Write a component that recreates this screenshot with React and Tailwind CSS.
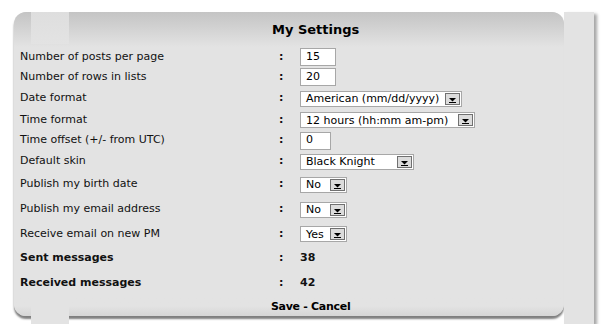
import React from 'react';

const Arrow = () => (
    <svg width="9" height="6" viewBox="0 0 9 6" className="block">
        <path d="M1 1h7L4.5 4.5z" fill="#000" />
        <rect x="1" y="5" width="7" height="1" fill="#000" />
    </svg>
);

const TextBox = ({ value, width }) => (
    <div className={`${width} h-[18px] border border-[#a7a7a7] bg-white flex items-center px-[5px] text-[11px] text-black`}>
        {value}
    </div>
);

const Select = ({ value, width }) => (
    <div className={`${width} h-[16px] border border-[#a7a7a7] bg-white flex items-center justify-between pl-[5px] pr-[1px]`}>
        <span className="text-[11px] text-black leading-none whitespace-nowrap">{value}</span>
        <div className="w-[15px] h-[12px] border border-[#707070] bg-[#dcdcdc] flex items-end justify-center pb-[1px] shrink-0">
            <Arrow />
        </div>
    </div>
);

const rows = [
    { label: 'Number of posts per page', h: 'h-[20px]', ctrl: <TextBox value="15" width="w-[36px]" /> },
    { label: 'Number of rows in lists', h: 'h-[20px]', ctrl: <TextBox value="20" width="w-[36px]" /> },
    { label: 'Date format', h: 'h-[23px]', ctrl: <Select value="American (mm/dd/yyyy)" width="w-[162px]" /> },
    { label: 'Time format', h: 'h-[20px]', ctrl: <Select value="12 hours (hh:mm am-pm)" width="w-[175px]" /> },
    { label: 'Time offset (+/- from UTC)', h: 'h-[21px]', ctrl: <TextBox value="0" width="w-[31px]" /> },
    { label: 'Default skin', h: 'h-[21px]', ctrl: <Select value="Black Knight" width="w-[114px]" /> },
    { label: 'Publish my birth date', h: 'h-[25px]', ctrl: <Select value="No" width="w-[47px]" /> },
    { label: 'Publish my email address', h: 'h-[25px]', ctrl: <Select value="No" width="w-[47px]" /> },
    { label: 'Receive email on new PM', h: 'h-[24px]', ctrl: <Select value="Yes" width="w-[47px]" /> },
    { label: 'Sent messages', h: 'h-[25px]', bold: true, ctrl: <span className="font-bold">38</span> },
    { label: 'Received messages', h: 'h-[25px]', bold: true, ctrl: <span className="font-bold">42</span> },
];

const App = () => {
    return (
        <div className="relative w-[602px] h-[324px] bg-white overflow-hidden text-[11px] text-[#111]" style={{ fontFamily: '"DejaVu Sans", Verdana, sans-serif' }}>
            <div className="absolute left-[14px] top-[12px] w-[550px] h-[304px] rounded-[12px] bg-[#e3e3e3] shadow-[0_3px_2px_rgba(0,0,0,0.5)] overflow-hidden flex flex-col">
                <div className="h-[35px] shrink-0 bg-gradient-to-b from-[#c4c4c4] to-[#e3e3e3] flex items-center pl-[258px]">
                    <h2 className="text-[13px] font-bold text-black">My Settings</h2>
                </div>
                <div className="flex flex-col px-[6px]">
                    {rows.map((row) => (
                        <div key={row.label} className={`${row.h} flex items-center`}>
                            <div className={`w-[259px] ${row.bold ? 'font-bold' : ''}`}>{row.label}</div>
                            <div className="w-[21px] font-bold">:</div>
                            <div>{row.ctrl}</div>
                        </div>
                    ))}
                </div>
                <div className="flex-1 flex items-center pl-[257px] pt-[3px] bg-gradient-to-b from-[#e3e3e3] from-50% to-[#d6d6d6] font-bold text-black">
                    <span className="tracking-[-0.3px]">Save - Cancel</span>
                </div>
            </div>
            <div className="absolute left-[31px] top-[12px] w-[38px] h-[32px] bg-gradient-to-b from-[#dedede] to-[#e3e3e3]" />
            <div className="absolute left-[31px] top-[297px] w-[38px] h-[27px] bg-[#e3e3e3]" />
            <div className="absolute left-[564px] top-[12px] w-[30px] h-[312px] bg-[#e3e3e3] shadow-[3px_2px_3px_rgba(0,0,0,0.35)]" />
        </div>
    );
};

export default App;
